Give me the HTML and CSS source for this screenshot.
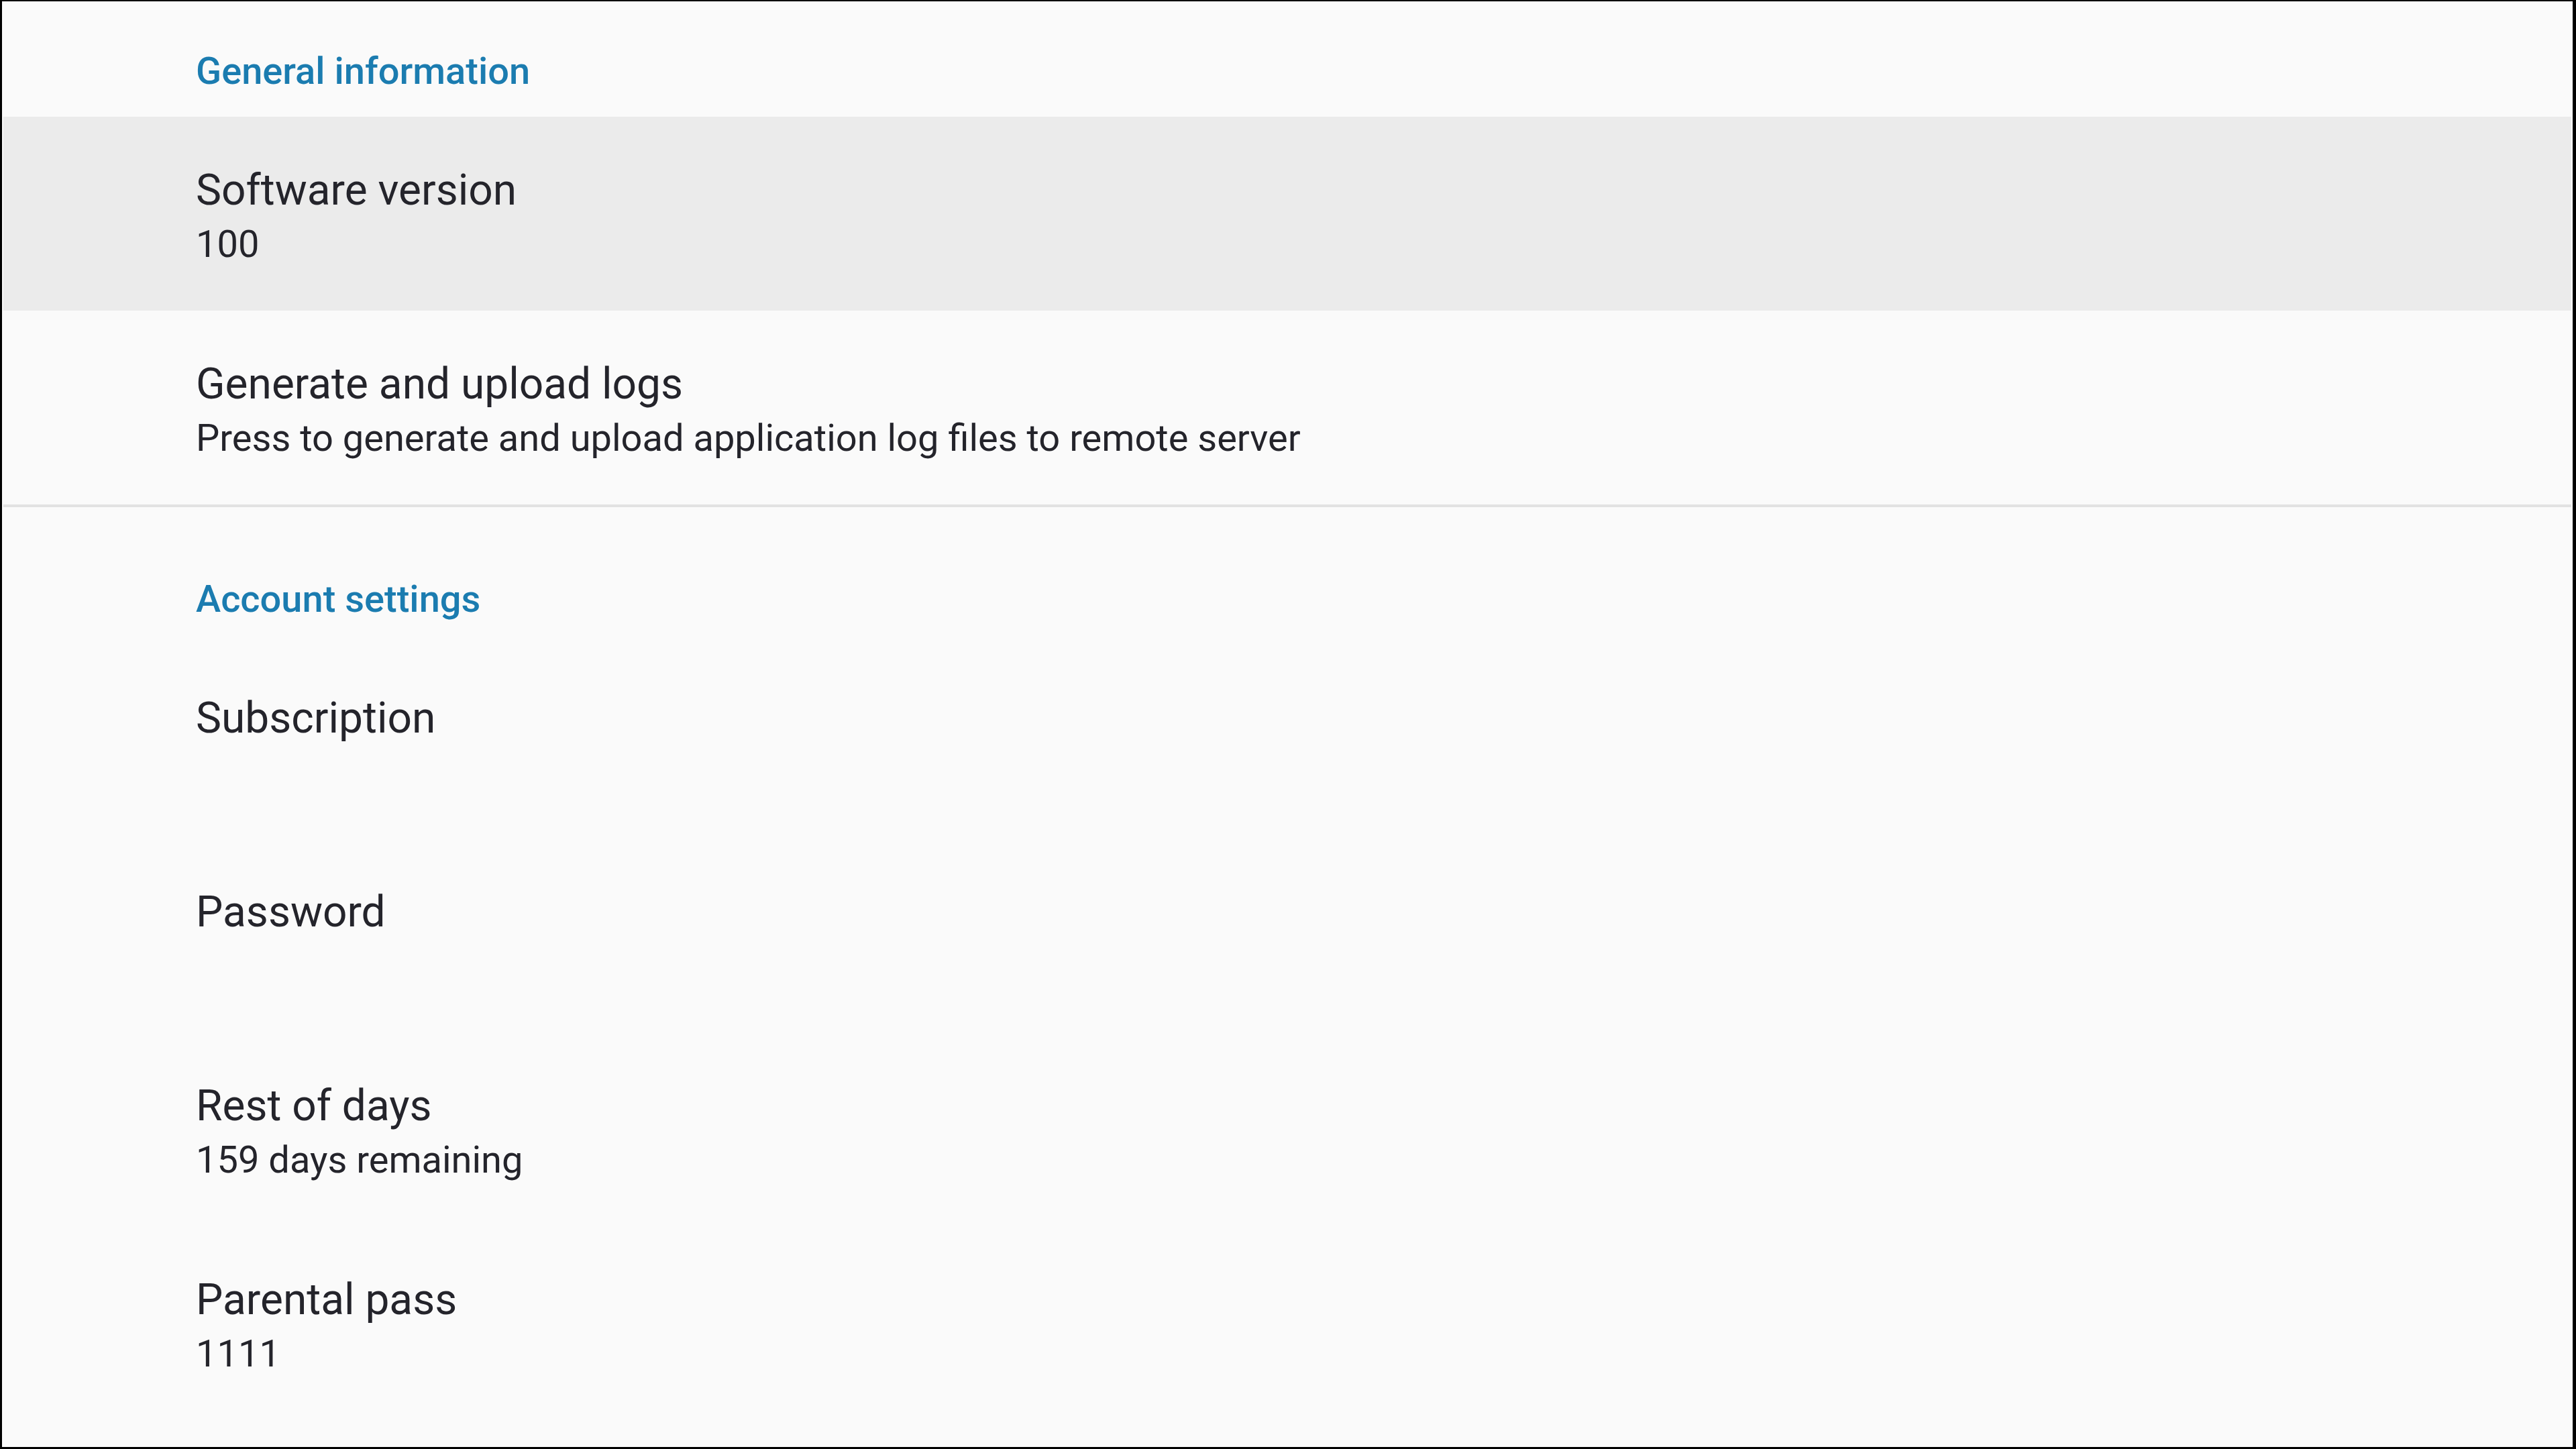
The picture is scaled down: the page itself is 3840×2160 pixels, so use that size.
FILE: index.html
```html
<!DOCTYPE html>
<html lang="en">
<head>
<meta charset="utf-8">
<title>Settings</title>
<link rel="stylesheet" href="styles.css">
</head>
<body>
<div class="screen">
  <div class="content">
    <section class="group">
      <div class="group-header first">General information</div>
      <div class="pref selected">
        <div class="pref-title">Software version</div>
        <div class="pref-summary">100</div>
      </div>
      <div class="pref">
        <div class="pref-title">Generate and upload logs</div>
        <div class="pref-summary">Press to generate and upload application log files to remote server</div>
      </div>
    </section>
    <div class="divider"></div>
    <section class="group">
      <div class="group-header">Account settings</div>
      <div class="pref">
        <div class="pref-title">Subscription</div>
      </div>
      <div class="pref">
        <div class="pref-title">Password</div>
      </div>
      <div class="pref">
        <div class="pref-title">Rest of days</div>
        <div class="pref-summary">159 days remaining</div>
      </div>
      <div class="pref">
        <div class="pref-title">Parental pass</div>
        <div class="pref-summary">1111</div>
      </div>
    </section>
  </div>
</div>
</body>
</html>
```
FILE: styles.css
```css
html, body {
  margin: 0;
  padding: 0;
  background: #000;
}

.screen {
  box-sizing: border-box;
  width: 100vw;
  height: 100vh;
  border-style: solid;
  border-color: #000;
  border-width: 2px 5px 3px 3px;
  background: #fafafa;
  overflow: hidden;
  font-family: Roboto, "Noto Sans", "Liberation Sans", sans-serif;
  color: #24242b;
}

.content {
  display: flex;
  flex-direction: column;
  padding: 0 2px;
}

.group {
  display: flex;
  flex-direction: column;
}

.group-header {
  box-sizing: border-box;
  height: 205px;
  padding: 97px 0 0 287px;
  font-size: 56px;
  font-weight: 500;
  line-height: 80px;
  color: #1b7cb0;
}

.group-header.first {
  height: 172px;
  padding-top: 64px;
}

.pref {
  box-sizing: border-box;
  height: 289px;
  padding: 70px 0 0 287px;
}

.pref.selected {
  background: #ebebeb;
}

.pref-title {
  font-size: 64px;
  line-height: 80px;
}

.pref-summary {
  font-size: 56px;
  line-height: 80px;
}

.divider {
  height: 4px;
  background: #e2e2e2;
}
```
